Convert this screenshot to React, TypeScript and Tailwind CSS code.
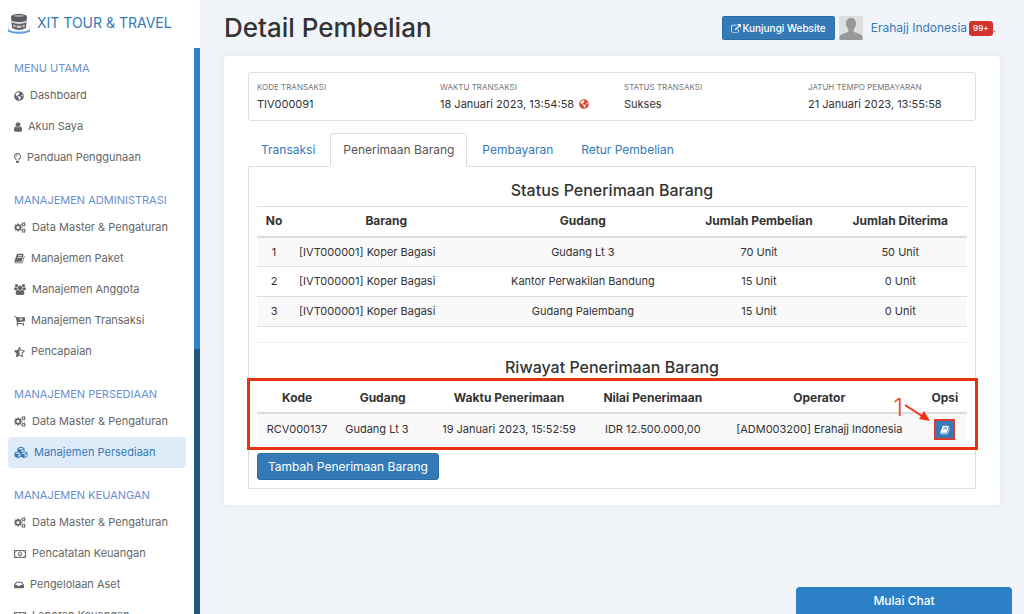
import React from "react";
import { FaCubes, FaGlobeAmericas, FaInbox, FaRegLightbulb, FaStarHalfAlt } from "react-icons/fa";

type IconProps = { className?: string };

const satellite =
  "q-12 27-30 52 51 113 51 138 0 4-4 7-122 71-124 71-8 0-46-47t-52-68q-20 2-30 2t-30-2q-14 21-52 68t-46 47q-2 0-124-71-4-3-4-7 0-25 51-138-18-25-30-52-149-15-149-31v-140q0-16 149-31 13-29 30-52-51-113-51-138 0-4 4-7 4-2 35-20t59-34 30-16q8 0 46 46.5t52 67.5q20-2 30-2t30 2q51-71 92-112l6-2q4 0 124 70 4 3 4 7 0 25-51 138 17 23 30 52 149 15 149 31";

function Cogs({ className }: IconProps) {
  return (
    <svg viewBox="0 0 1920 1792" className={className} fill="currentColor" fillRule="evenodd">
      <path d="M896 896q0-106-75-181t-181-75-181 75-75 181 75 181 181 75 181-75 75-181zm384-91v185q0 10-7 19.5t-16 10.5l-155 24q-11 35-32 76 34 48 90 115 7 11 7 20 0 12-7 19-23 30-82.5 89.5t-78.5 59.5q-11 0-21-7l-115-90q-37 19-77 31-11 108-23 155-7 24-30 24h-186q-11 0-20-7.5t-10-17.5l-23-153q-34-10-75-31l-118 89q-7 7-20 7-11 0-21-8-144-133-144-160 0-9 7-19 10-14 41-53t47-61q-23-44-35-82l-152-24q-10-1-17-9.5t-7-19.5v-185q0-10 7-19.5t16-10.5l155-24q11-35 32-76-34-48-90-115-7-11-7-20 0-12 7-20 22-30 82-89t79-59q11 0 21 7l115 90q34-18 77-32 11-108 23-154 7-24 30-24h186q11 0 20 7.5t10 17.5l23 153q34 10 75 31l118-89q8-7 20-7 11 0 21 8 144 133 144 160 0 8-7 19-12 16-42 54t-45 60q23 48 34 82l152 23q10 2 17 10.5t7 19.5z" />
      <path d={`M1664 1408q0-52-38-90t-90-38-90 38-38 90q0 53 37.5 90.5t90.5 37.5 90.5-37.5 37.5-90.5zm256-70v140q0 16-149 31${satellite}z`} />
      <path d={`M1664 384q0-52-38-90t-90-38-90 38-38 90q0 53 37.5 90.5t90.5 37.5 90.5-37.5 37.5-90.5zm256-70v140q0 16-149 31${satellite}z`} />
    </svg>
  );
}

function Person({ className }: IconProps) {
  return (
    <svg viewBox="256 128 1280 1536" className={className} fill="currentColor">
      <path d="M1536 1399q0 109-62.5 187t-150.5 78h-854q-88 0-150.5-78t-62.5-187q0-85 8.5-160.5t31.5-152 58.5-131 94-89 134.5-34.5q131 128 313 128t313-128q76 0 134.5 34.5t94 89 58.5 131 31.5 152 8.5 160.5zm-256-887q0 159-112.5 271.5t-271.5 112.5-271.5-112.5-112.5-271.5 112.5-271.5 271.5-112.5 271.5 112.5 112.5 271.5z" />
    </svg>
  );
}

function Book({ className }: IconProps) {
  return (
    <svg viewBox="0 0 1792 1792" className={className} fill="currentColor">
      <path d="M1703 478q40 57 18 129l-275 906q-19 64-76.5 107.5t-122.5 43.5h-923q-77 0-148.5-53.5t-99.5-131.5q-24-67-2-127 0-4 3-27t4-37q1-8-3-21.5t-3-19.5q2-11 8-21t16.5-23.5 16.5-23.5q23-38 45-91.5t30-91.5q3-10 .5-30t-.5-28q3-11 17-28t17-23q21-36 42-92t25-90q1-9-2.5-32t.5-28q4-13 22-30.5t22-22.5q19-26 42.5-84.5t27.5-96.5q1-8-3-25.5t-2-26.5q2-8 9-18t18-23 17-21q8-12 16.5-30.5t15-35 16-36 19.5-32 26.5-23.5 36-11.5 47.5 5.5l-1 3q38-9 51-9h761q74 0 114 56t18 130l-274 906q-36 119-71.5 153.5t-128.5 34.5h-869q-27 0-38 15-11 16-1 43 24 70 144 70h923q29 0 56-15.5t35-41.5l300-987q7-22 5-57 38 15 59 43zm-1064 2q-4 13 2 22.5t20 9.5h608q13 0 25.5-9.5t16.5-22.5l21-64q4-13-2-22.5t-20-9.5h-608q-13 0-25.5 9.5t-16.5 22.5zm-83 256q-4 13 2 22.5t20 9.5h608q13 0 25.5-9.5t16.5-22.5l21-64q4-13-2-22.5t-20-9.5h-608q-13 0-25.5 9.5t-16.5 22.5z" />
    </svg>
  );
}

function Group({ className }: IconProps) {
  return (
    <svg viewBox="-64 0 1920 1792" className={className} fill="currentColor">
      <path d="M529 896q-162 5-265 128h-134q-82 0-138-40.5t-56-118.5q0-353 124-353 6 0 43.5 21t97.5 42.5 119 21.5q67 0 133-23-5 37-5 66 0 139 81 256zm1071 637q0 120-73 189.5t-194 69.5h-874q-121 0-194-69.5t-73-189.5q0-53 3.5-103.5t14-109 26.5-108.5 43-97.5 62-81 85.5-53.5 111.5-20q10 0 43 21.5t73 48 107 48 135 21.5 135-21.5 107-48 73-48 43-21.5q61 0 111.5 20t85.5 53.5 62 81 43 97.5 26.5 108.5 14 109 3.5 103.5zm-1024-1277q0 106-75 181t-181 75-181-75-75-181 75-181 181-75 181 75 75 181zm704 384q0 159-112.5 271.5t-271.5 112.5-271.5-112.5-112.5-271.5 112.5-271.5 271.5-112.5 271.5 112.5 112.5 271.5zm576 225q0 78-56 118.5t-138 40.5h-134q-103-123-265-128 81-117 81-256 0-29-5-66 66 23 133 23 59 0 119-21.5t97.5-42.5 43.5-21q124 0 124 353zm-128-609q0 106-75 181t-181 75-181-75-75-181 75-181 181-75 181 75 75 181z" />
    </svg>
  );
}

function ExternalLink({ className }: IconProps) {
  return (
    <svg viewBox="0 0 1792 1600" className={className} fill="currentColor">
      <path d="M1408 928v320q0 119-84.5 203.5t-203.5 84.5h-832q-119 0-203.5-84.5t-84.5-203.5v-832q0-119 84.5-203.5t203.5-84.5h704q14 0 23 9t9 23v64q0 14-9 23t-23 9h-704q-66 0-113 47t-47 113v832q0 66 47 113t113 47h832q66 0 113-47t47-113v-320q0-14 9-23t23-9h64q14 0 23 9t9 23zm384-864v512q0 26-19 45t-45 19-45-19l-176-176-652 652q-10 10-23 10t-23-10l-114-114q-10-10-10-23t10-23l652-652-176-176q-19-19-19-45t19-45 45-19h512q26 0 45 19t19 45z" />
    </svg>
  );
}

function CartPlus({ className }: IconProps) {
  return (
    <svg viewBox="64 256 1664 1408" className={className} fill="currentColor">
      <path d="M704 1536q0 52-38 90t-90 38-90-38-38-90 38-90 90-38 90 38 38 90zm896 0q0 52-38 90t-90 38-90-38-38-90 38-90 90-38 90 38 38 90zm128-1088v512q0 24-16.5 42.500t-40.500 21.500l-1044 122q13 60 13 70 0 16-24 64h920q26 0 45 19t19 45-19 45-45 19h-1024q-26 0-45-19t-19-45q0-11 8-31.500t16-36 21.500-40 15.500-29.500l-177-823h-204q-26 0-45-19t-19-45 19-45 45-19h256q16 0 28.500 6.500t19.500 15.500 13 24.500 8 26 5.500 29.500 4.500 26h1201q26 0 45 19t19 45z" />
      <path d="M1120 480v448M896 704h448" stroke="#fff" strokeWidth="128" />
    </svg>
  );
}

function Money({ className }: IconProps) {
  return (
    <svg viewBox="0 0 24 16" className={className} fill="none" stroke="currentColor" strokeWidth="1.8">
      <rect x="1" y="1" width="22" height="14" />
      <path d="M1 5q4 0 4-4M19 1q0 4 4 4M1 11q4 0 4 4M19 15q0-4 4-4" strokeWidth="1.4" />
      <ellipse cx="12" cy="8" rx="3.6" ry="4.6" strokeWidth="1.6" />
      <path d="M11 6.5l1.3-1v5M10.5 10.5h3.4" strokeWidth="1.2" />
    </svg>
  );
}

function Logo() {
  return (
    <svg viewBox="0 0 24 24" className="h-6 w-6 shrink-0">
      <path d="M1 14q0 5 5 6h12q5-1 5-6v6q-5 3-11 3t-11-3z" fill="#b5d6f3" />
      <path d="M1 19q11 4.500 22 0v1.800q-11 4-22 0z" fill="#5b9cd8" />
      <path d="M4 4.800q8-4.200 16 0l-1 12.200q-7 4-14 0z" fill="#5b5c60" />
      <path d="M4.500 9.800q7.500 2.600 15 0v1.800q-7.500 2.600-15 0z" fill="#dadadc" />
      <path d="M6 13.500q6 2.200 12 0l-.3 2.600q-5.700 2.200-11.400 0z" fill="#c2c2c5" />
      <path d="M6 5q6-2.400 12 0-6 2-12 0z" fill="#a5a5a9" />
      <path d="M9 14v3M15 14v3" stroke="#55565a" strokeWidth="1" />
    </svg>
  );
}

function Avatar() {
  return (
    <svg viewBox="0 0 24 24" className="h-6 w-6 shrink-0" role="img" aria-label="Foto profil">
      <rect width="24" height="24" fill="#dedede" />
      <path d="M12 2c3.200 0 5 2 4.900 5.200 .5.400.3 2.200-.5 2.600-.3 1.700-1 2.700-1.800 3.400v2.300c1 1.500 8 2 8.900 5.200V24H.5v-3.300c.9-3.200 7.900-3.700 8.900-5.200v-2.300c-.8-.7-1.500-1.700-1.800-3.400-.8-.4-1-2.200-.5-2.600C7 4 8.800 2 12 2z" fill="#979797" />
    </svg>
  );
}

type Item = { label: string; icon: React.ComponentType<IconProps>; size: string; active?: boolean };
const cogs = "h-[11px] w-3";
const groups: { title: string; items: Item[] }[] = [
  {
    title: "MENU UTAMA",
    items: [
      { label: "Dashboard", icon: FaGlobeAmericas, size: "h-[10px] w-[10px]" },
      { label: "Akun Saya", icon: Person, size: "h-[10px] w-2" },
      { label: "Panduan Penggunaan", icon: FaRegLightbulb, size: "h-[10px] w-[7px]" },
    ],
  },
  {
    title: "MANAJEMEN ADMINISTRASI",
    items: [
      { label: "Data Master & Pengaturan", icon: Cogs, size: cogs },
      { label: "Manajemen Paket", icon: Book, size: "h-[11px] w-[11px]" },
      { label: "Manajemen Anggota", icon: Group, size: "h-[11px] w-3" },
      { label: "Manajemen Transaksi", icon: CartPlus, size: "h-[10px] w-[11px]" },
      { label: "Pencapaian", icon: FaStarHalfAlt, size: "h-[10px] w-[11px]" },
    ],
  },
  {
    title: "MANAJEMEN PERSEDIAAN",
    items: [
      { label: "Data Master & Pengaturan", icon: Cogs, size: cogs },
      { label: "Manajemen Persediaan", icon: FaCubes, size: "h-[13px] w-[14px]", active: true },
    ],
  },
  {
    title: "MANAJEMEN KEUANGAN",
    items: [
      { label: "Data Master & Pengaturan", icon: Cogs, size: cogs },
      { label: "Pencatatan Keuangan", icon: Money, size: "h-2 w-3" },
      { label: "Pengelolaan Aset", icon: FaInbox, size: "h-[10px] w-[10px]" },
      { label: "Laporan Keuangan", icon: Money, size: "h-2 w-3" },
    ],
  },
];

function Sidebar() {
  return (
    <aside className="flex w-[200px] shrink-0 flex-col bg-white">
      <a href="#" className="flex h-12 shrink-0 items-center gap-[6px] pb-[2px] pl-[7px] text-sm text-[#337ab7]">
        <Logo />
        <span>XIT TOUR &amp; TRAVEL</span>
      </a>
      <div className="flex min-h-0 grow">
        <nav className="min-w-0 grow overflow-hidden px-2 pt-[9px]">
          {groups.map((g) => (
            <section key={g.title} className="mb-4">
              <h2 className="h-[23px] pl-[6px] text-[11px] leading-[23px] whitespace-nowrap text-[#6a8fd0]">{g.title}</h2>
              {g.items.map(({ label, icon: Icon, size, active }) => (
                <a
                  key={label}
                  href="#"
                  className={`flex h-[31px] items-center gap-[6px] rounded pl-[6px] text-[11px] whitespace-nowrap ${active ? "bg-[#e0ebf9] text-[#337ab7]" : "text-[#666]"}`}
                >
                  <Icon className={`shrink-0 ${size}`} />
                  {label}
                </a>
              ))}
            </section>
          ))}
        </nav>
        <div className="w-[6px] shrink-0 bg-[#1e5780]">
          <div className="h-[301px] bg-[#2b80c8]" />
        </div>
      </div>
    </aside>
  );
}

const info = [
  ["KODE TRANSAKSI", "TIV000091"],
  ["WAKTU TRANSAKSI", "18 Januari 2023, 13:54:58"],
  ["STATUS TRANSAKSI", "Sukses"],
  ["JATUH TEMPO PEMBAYARAN", "21 Januari 2023, 13:55:58"],
];

const stock = [
  ["1", "[IVT000001] Koper Bagasi", "Gudang Lt 3", "70 Unit", "50 Unit"],
  ["2", "[IVT000001] Koper Bagasi", "Kantor Perwakilan Bandung", "15 Unit", "0 Unit"],
  ["3", "[IVT000001] Koper Bagasi", "Gudang Palembang", "15 Unit", "0 Unit"],
];

const tabs = ["Transaksi", "Penerimaan Barang", "Pembayaran", "Retur Pembelian"];

export default function App() {
  return (
    <div className="flex h-screen overflow-hidden bg-[#f1f5f9] font-['Inter','Liberation_Sans',sans-serif] text-[11px] text-[#333]">
      <Sidebar />
      <main className="min-w-0 grow px-6">
        <header className="flex h-14 items-center justify-between">
          <h1 className="text-[26px] leading-8 font-medium">Detail Pembelian</h1>
          <div className="flex items-center gap-1 pr-1">
            <button className="flex h-6 items-center gap-[2px] rounded-[2px] border border-[#2e6da4] bg-[#337ab7] px-2 text-[10px] font-medium text-white">
              <ExternalLink className="h-[9px] w-[10px]" />
              Kunjungi Website
            </button>
            <Avatar />
            <a href="#" className="flex items-center pl-1 text-xs text-[#337ab7]">
              Erahajj Indonesia
              <span className="ml-[2px] rounded-[3px] bg-[#d0342c] px-1 text-[8px] leading-[15px] font-medium text-white">99+</span>.
            </a>
          </div>
        </header>

        <div className="rounded bg-white px-6 py-4 shadow-[0_0_12px_rgba(80,100,130,0.09)]">
          <dl className="grid h-[49px] grid-cols-[183px_184px_184px_1fr] rounded-[3px] border border-[#ddd] px-2 pt-[6px]">
            {info.map(([k, v], i) => (
              <div key={k}>
                <dt className="text-[8px] leading-4 text-[#777]">{k}</dt>
                <dd className="flex items-center gap-[5px] leading-[18px]">
                  {v}
                  {i === 1 && <FaGlobeAmericas className="h-[10px] w-[10px] text-[#d9432f]" />}
                </dd>
              </div>
            ))}
          </dl>

          <div role="tablist" className="mt-3 flex">
            {tabs.map((t, i) => (
              <button
                key={t}
                role="tab"
                aria-selected={i === 1}
                className={`relative -mb-px h-[34px] rounded-t-[3px] border px-3 text-xs whitespace-nowrap ${i === 1 ? "mr-[2px] border-[#ddd] border-b-white bg-white text-[#555]" : "mr-[2px] border-transparent text-[#337ab7]"}`}
              >
                {t}
              </button>
            ))}
          </div>

          <section className="border border-[#ddd] p-2">
            <h2 className="h-[31px] text-center text-base leading-[30px] font-medium">Status Penerimaan Barang</h2>
            <table className="w-full table-fixed border-collapse text-center">
              <colgroup>
                <col className="w-[4.800%]" />
                <col className="w-[26.800%]" />
                <col className="w-[28.600%]" />
                <col className="w-[21%]" />
                <col className="w-[18.800%]" />
              </colgroup>
              <thead>
                <tr className="h-[30px] border-t border-b-2 border-[#ddd] text-xs">
                  {["No", "Barang", "Gudang", "Jumlah Pembelian", "Jumlah Diterima"].map((h) => (
                    <th key={h} scope="col" className="p-0 font-bold">{h}</th>
                  ))}
                </tr>
              </thead>
              <tbody>
                {stock.map((r) => (
                  <tr key={r[0]} className="h-[30px] border-b border-[#ddd] odd:bg-[#f9f9f9]">
                    {r.map((c, i) => (
                      <td key={i} className={`whitespace-nowrap ${i === 1 ? "pl-2 text-left" : "p-0"}`}>{c}</td>
                    ))}
                  </tr>
                ))}
              </tbody>
            </table>

            <hr className="mt-[15px] border-[#eee]" />
            <h2 className="mt-2 h-8 text-center text-base leading-8 font-medium">Riwayat Penerimaan Barang</h2>

            <div className="relative">
              <table className="w-full table-fixed border-collapse text-center">
                <colgroup>
                  <col className="w-[11.300%]" />
                  <col className="w-[12.800%]" />
                  <col className="w-[22.800%]" />
                  <col className="w-[17.700%]" />
                  <col className="w-[29.200%]" />
                  <col className="w-[6.200%]" />
                </colgroup>
                <thead>
                  <tr className="h-[30px] border-b-2 border-[#ddd] text-xs">
                    {["Kode", "Gudang", "Waktu Penerimaan", "Nilai Penerimaan", "Operator", "Opsi"].map((h) => (
                      <th key={h} scope="col" className="p-0 font-bold">{h}</th>
                    ))}
                  </tr>
                </thead>
                <tbody>
                  <tr className="h-8 bg-[#f9f9f9] whitespace-nowrap">
                    <td className="p-0">RCV000137</td>
                    <td className="py-0 pl-2 text-left">Gudang Lt 3</td>
                    <td className="p-0">19 Januari 2023, 15:52:59</td>
                    <td className="p-0">IDR 12.500.000,00</td>
                    <td className="p-0">[ADM003200] Erahajj Indonesia</td>
                    <td className="p-0">
                      <button aria-label="Detail penerimaan" className="mx-auto flex h-[21px] w-[21px] items-center justify-center border-2 border-[#dc3b2c] bg-[#337ab7] text-white">
                        <Book className="h-[10px] w-[10px]" />
                      </button>
                    </td>
                  </tr>
                </tbody>
              </table>
              <div className="pointer-events-none absolute -top-[5px] -right-[11px] -bottom-[5px] -left-[10px] border-[3px] border-[#e8330f]" />
              <div className="pointer-events-none absolute top-[11px] right-9 flex text-[#f0432f]">
                <span className="text-2xl leading-7 font-light">1</span>
                <svg viewBox="0 0 28 24" className="mt-1 h-6 w-7">
                  <path d="M2 7l17 11" stroke="#ee3311" strokeWidth="2" />
                  <path d="M27 23l-11-2 5-8z" fill="#ee3311" />
                </svg>
              </div>
            </div>

            <button className="mt-2 h-[27px] rounded-[3px] border border-[#2e6da4] bg-[#337ab7] px-[10px] text-xs text-white">
              Tambah Penerimaan Barang
            </button>
          </section>
        </div>
      </main>
      <button className="fixed right-3 bottom-0 h-[27px] w-[216px] rounded-t bg-[#2b80c8] text-xs font-medium text-white">Mulai Chat</button>
    </div>
  );
}
